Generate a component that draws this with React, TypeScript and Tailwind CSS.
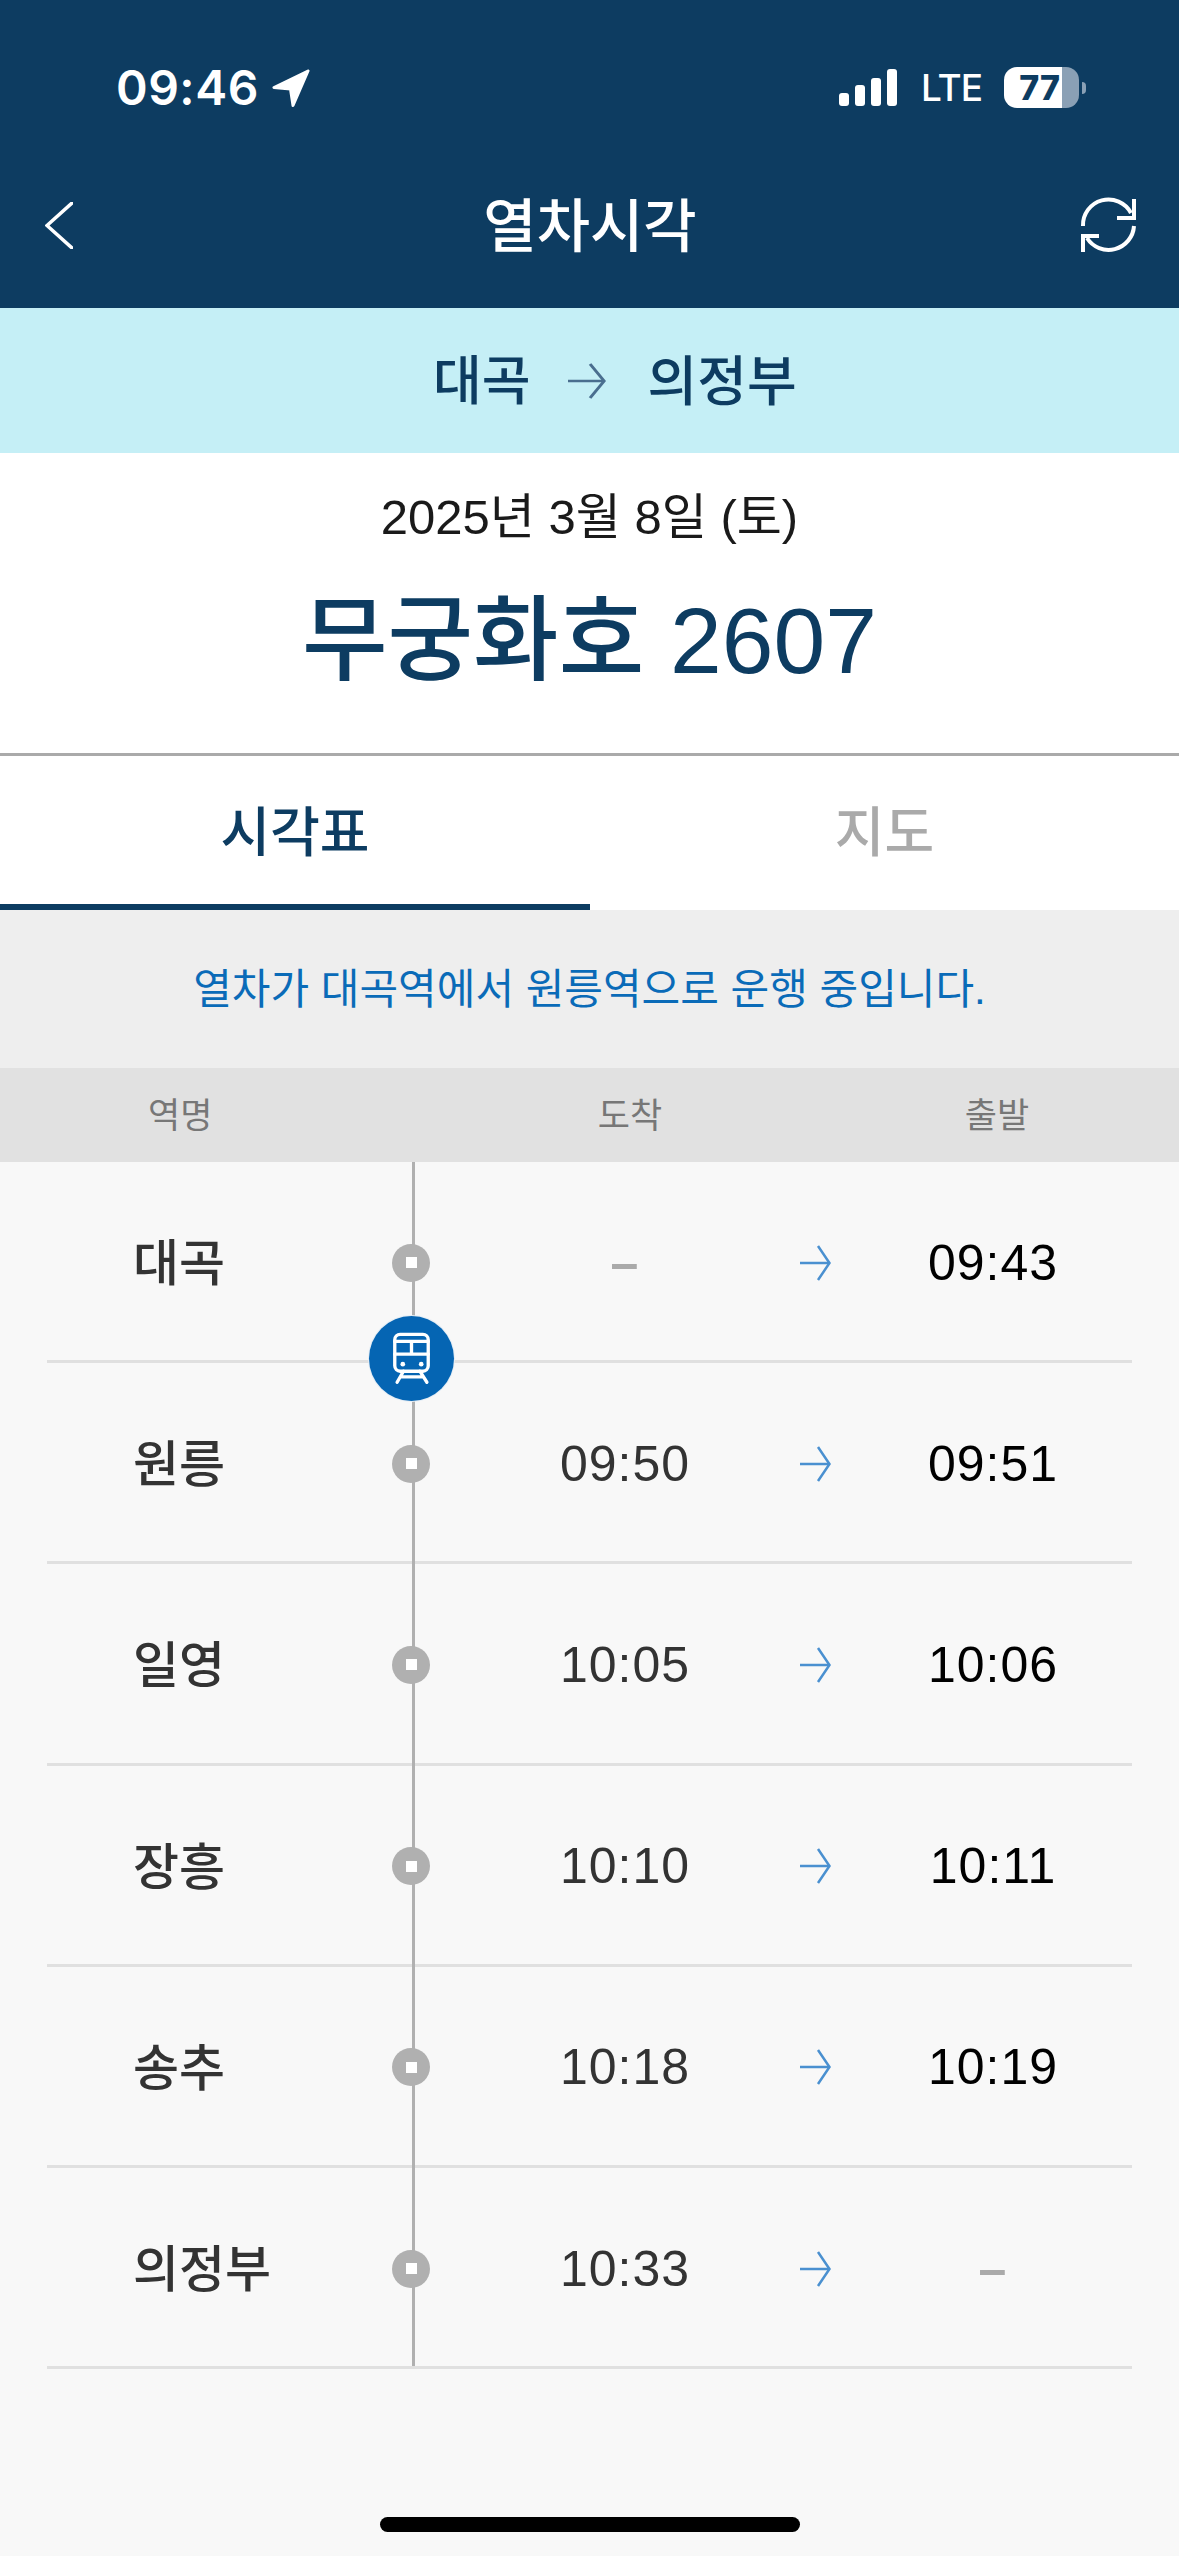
type Stop = { name: string; arrive: string; depart: string };

const stops: Stop[] = [
  { name: "대곡", arrive: "–", depart: "09:43" },
  { name: "원릉", arrive: "09:50", depart: "09:51" },
  { name: "일영", arrive: "10:05", depart: "10:06" },
  { name: "장흥", arrive: "10:10", depart: "10:11" },
  { name: "송추", arrive: "10:18", depart: "10:19" },
  { name: "의정부", arrive: "10:33", depart: "–" },
];

function ThinArrow({ className }: { className: string }) {
  return (
    <svg className={className} viewBox="0 0 31 36" preserveAspectRatio="none" fill="none" stroke="currentColor" strokeWidth="2.5">
      <path d="M0 18H29" />
      <path d="M18 1L29.5 18L18 35" />
    </svg>
  );
}

function StatusBar() {
  return (
    <div className="flex items-center h-[41px] pl-[116px] font-['Inter',sans-serif] text-white">
      <span className="text-[48px] font-semibold leading-none tracking-[0.5px]">09:46</span>
      <svg className="ml-[13px] w-[38px] h-[38px]" viewBox="0 0 38 38" fill="#fff" stroke="#fff" strokeWidth="3" strokeLinejoin="round">
        <path d="M36 2L2 18.5L18.5 20L21 36.5Z" />
      </svg>
      <div className="ml-auto flex items-end gap-[6px] h-[37px]">
        <div className="w-[10px] h-[13px] bg-white rounded-[3px]" />
        <div className="w-[10px] h-[21px] bg-white rounded-[3px]" />
        <div className="w-[10px] h-[28px] bg-white rounded-[3px]" />
        <div className="w-[10px] h-[37px] bg-white rounded-[3px]" />
      </div>
      <span className="ml-[24px] text-[37px] font-medium leading-none tracking-[-1px]">LTE</span>
      <div className="ml-[22px] flex w-[75px] h-[41px] rounded-[13px] overflow-hidden">
        <div className="w-[58px] bg-white flex items-center justify-end pr-[2px]">
          <span className="text-[34px] font-extrabold leading-none text-[#0d3c61]">77</span>
        </div>
        <div className="flex-1 bg-[#8aa0b5]" />
      </div>
      <div className="ml-[3px] mr-[93px] w-[4px] h-[12px] rounded-r-full bg-[#8aa0b5]" />
    </div>
  );
}

function NavBar() {
  return (
    <div className="grid grid-cols-[1fr_auto_1fr] items-center h-[100px] mt-[67px] pl-[45px] pr-[44px]">
      <svg className="w-[28px] h-[47px]" viewBox="0 0 28 47" fill="none" stroke="#fff" strokeWidth="3.5" strokeLinecap="round">
        <path d="M27 1L2 23.5L27 46" />
      </svg>
      <span className="pt-[3px] text-[58px] leading-none text-white font-medium">열차시각</span>
      <svg className="w-[53px] h-[53px] justify-self-end" viewBox="0 0 53 53" fill="none" stroke="#fff" strokeWidth="4" overflow="visible">
        <path d="M1 27A25.5 25.5 0 0 1 49 14" />
        <path d="M52 0V19H35" />
        <path d="M52 27A25.5 25.5 0 0 1 5 39" />
        <path d="M17 37H1V53" />
      </svg>
    </div>
  );
}

function TrainBadge() {
  return (
    <div className="absolute z-20 left-[369px] top-[154px] w-[85px] h-[85px] rounded-full bg-[#0565b3] shadow-[0_0_0_1px_#e6eef5]">
      <svg className="w-full h-full" viewBox="0 0 254 254" fill="none" stroke="#fff" strokeWidth="10" strokeLinecap="round">
        <rect x="77" y="55" width="100" height="110" rx="16" />
        <path d="M77 76H177M127 76V114M77 114H177" />
        <circle cx="101" cy="144" r="7" fill="#fff" stroke="none" />
        <circle cx="156" cy="144" r="7" fill="#fff" stroke="none" />
        <path d="M103 165L84 198M152 165L173 198M94 182H163" />
      </svg>
    </div>
  );
}

export default function App() {
  return (
    <div className="min-h-[2556px] bg-[#f8f8f8] font-['Liberation_Sans','Noto_Sans_CJK_KR',sans-serif]">
      <header className="h-[308px] bg-[#0d3c61] pt-[67px]">
        <StatusBar />
        <NavBar />
      </header>

      <div className="h-[145px] bg-[#c5eff6] flex items-center pl-[433px] text-[#0d3c61]">
        <span className="pt-[2px] text-[53px] font-medium leading-none">대곡</span>
        <ThinArrow className="ml-[37px] w-[38px] h-[36px] text-[#4a6e8f]" />
        <span className="ml-[42px] pt-[2px] text-[54px] font-medium leading-none">의정부</span>
      </div>

      <div className="h-[300px] bg-white flex flex-col items-center">
        <div className="mt-[36px] text-[49px] leading-[56px] text-[#1a1a1a]">2025년 3월 8일 (토)</div>
        <div className="mt-[41px] text-[93px] font-medium leading-[110px] text-[#0d3c61]">
          <span>무궁화호</span> <span>2607</span>
        </div>
      </div>

      <div className="h-[157px] bg-white border-t-[3px] border-[#aaaaaa] flex">
        <div className="w-[590px] pt-[6px] border-b-[6px] border-[#0d3c61] flex items-center justify-center text-[54px] font-medium leading-none text-[#0d3c61]">
          시각표
        </div>
        <div className="flex-1 pt-[6px] pb-[6px] flex items-center justify-center text-[54px] font-medium leading-none text-[#aaaaaa]">
          지도
        </div>
      </div>

      <div className="h-[158px] pt-[2px] bg-[#eeeeee] flex items-center justify-center text-[42px] leading-none text-[#0a6bb8]">
        열차가 대곡역에서 원릉역으로 운행 중입니다.
      </div>

      <div className="h-[94px] bg-[#e1e1e1] flex items-center text-[35px] leading-none text-[#777777]">
        <span className="w-[358px] pl-[148px]">역명</span>
        <span className="w-[544px] text-center">도착</span>
        <span className="w-[190px] text-center">출발</span>
      </div>

      <div className="relative">
        {stops.map((stop) => (
          <div key={stop.name} className="h-[201.2px] mx-[47px] border-b-[3px] border-[#e0e0e0]">
            <div className="h-full pt-[3px] flex items-center">
              <span className="ml-[86px] w-[259px] pt-[3px] text-[50px] font-medium leading-none text-[#333333]">{stop.name}</span>
              <div className="w-[38px] h-[38px] rounded-full bg-[#b0b0b0] flex items-center justify-center relative z-20">
                <div className="w-[11px] h-[11px] bg-white" />
              </div>
              <span className={`ml-[35px] w-[320px] text-center text-[50px] leading-none tracking-[1px] ${stop.arrive === "–" ? "font-bold text-[#aaaaaa]" : "text-[#333333]"}`}>
                {stop.arrive}
              </span>
              <ThinArrow className="ml-[15px] w-[31px] h-[36px] text-[#4a90d0]" />
              <span className={`ml-[42px] w-[240px] text-center text-[50px] leading-none tracking-[1px] ${stop.depart === "–" ? "font-bold text-[#aaaaaa]" : "text-black"}`}>
                {stop.depart}
              </span>
            </div>
          </div>
        ))}
        <div className="absolute z-10 left-[412px] top-0 bottom-[3px] w-[3px] bg-[#b0b0b0]" />
        <TrainBadge />
      </div>

      <div className="mt-[148px] mx-auto w-[420px] h-[15px] rounded-full bg-black" />
    </div>
  );
}
